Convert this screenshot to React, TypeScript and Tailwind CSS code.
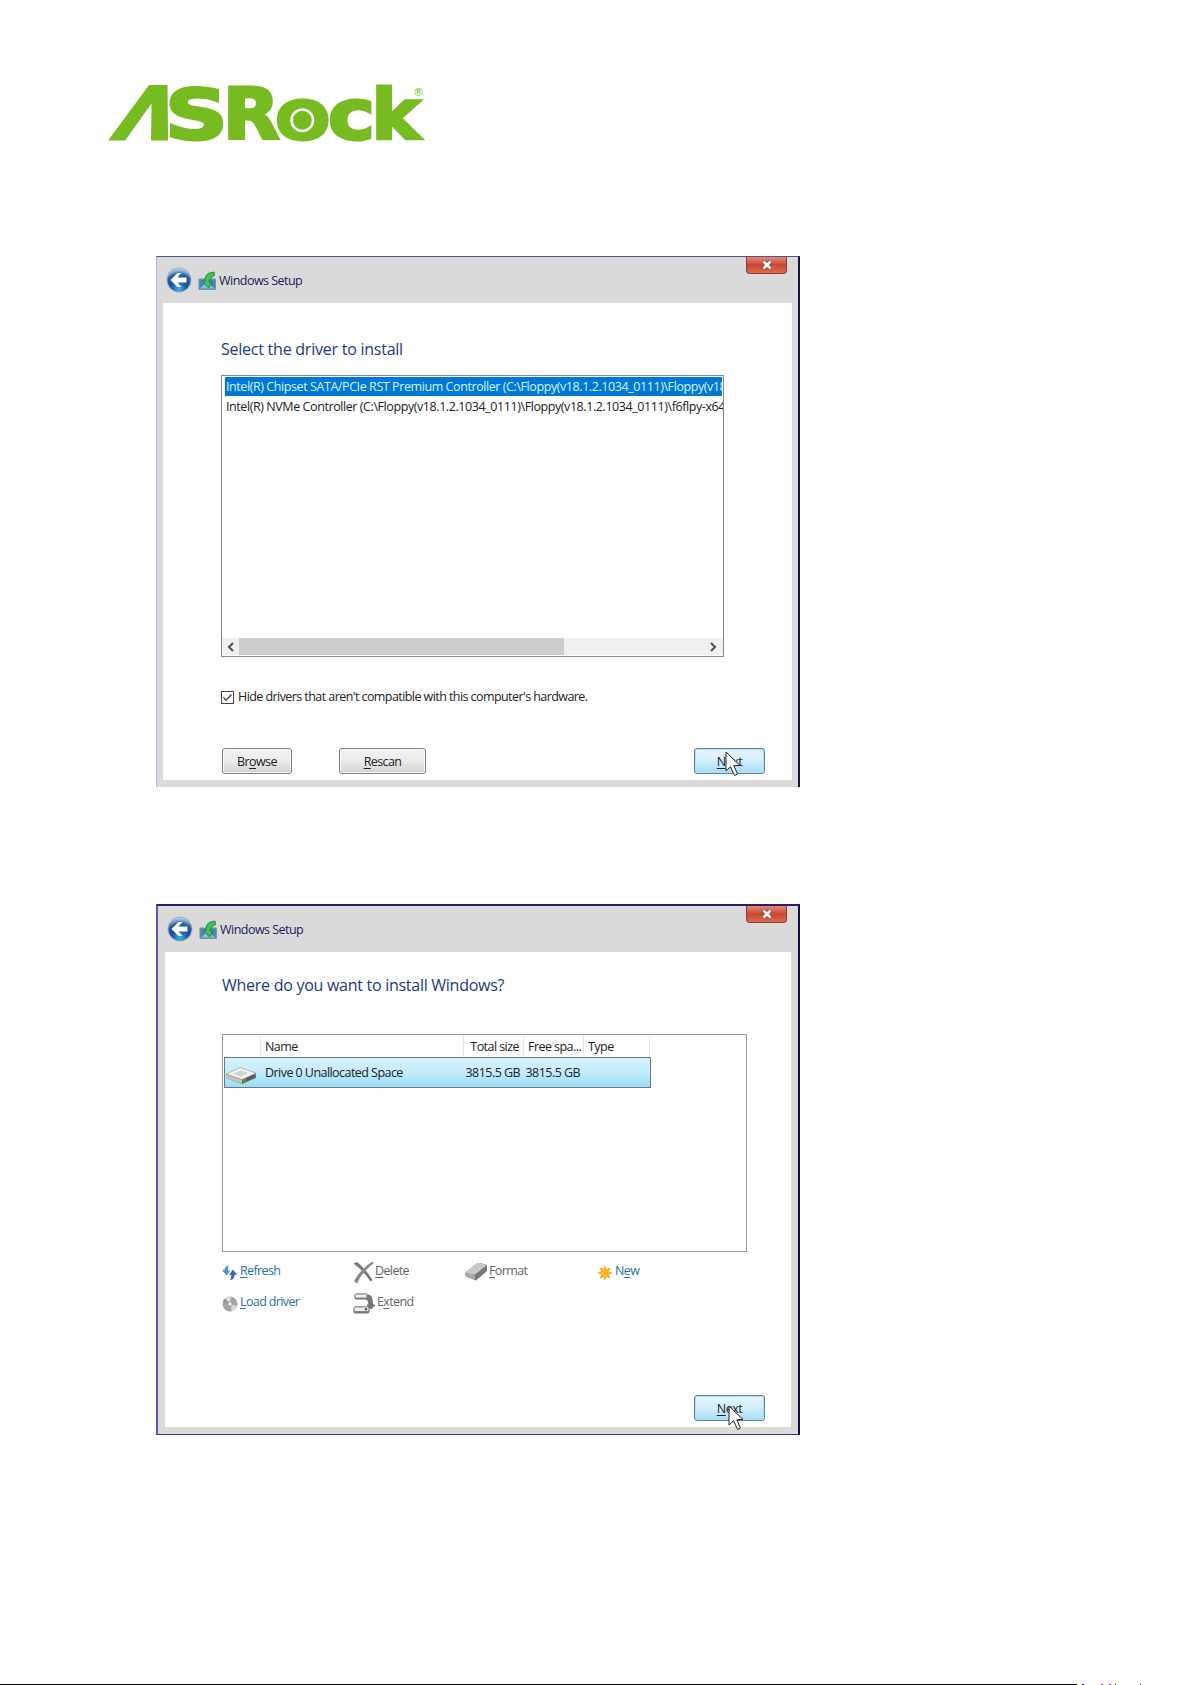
import * as React from 'react';

interface WindowFrameProps {
  className: string,
  barClass: string,
  closeClass: string,
  children: React.ReactNode,
}

export default function App() {
  return (
    <div className="flex h-[1685px] w-[1192px] flex-col overflow-hidden bg-white font-['Open_Sans','Noto_Sans',sans-serif] text-[12.5px] text-[#222]">
      <div className="h-[256px] pt-[60px] pl-[94px]">
        <Logo/>
      </div>
      <DriverWindow/>
      <div className="h-[117px]"/>
      <DiskWindow/>
      <Footer/>
    </div>
  )
}

function Logo() {
  return (
    <svg width="350" height="110" viewBox="94 60 350 110" className="overflow-visible fill-[#76bc21] stroke-[#76bc21] font-['DejaVu_Sans',sans-serif] font-bold" aria-label="ASRock">
      <g fontSize="72" strokeWidth="3">
        <text transform="translate(110.5 139.3) skewX(-20) scale(1.01 1)">Λ</text>
        <text transform="translate(165 138.6) scale(1.21 0.97)">S</text>
        <text transform="translate(223 139.3) scale(1.02 1)">R</text>
        <text transform="translate(275 138.9) scale(1.12 0.97)">o</text>
        <text transform="translate(328 138.9) scale(1.1 0.97)">c</text>
        <text transform="translate(371.5 139.3) scale(1.02 0.96)">k</text>
      </g>
      <circle cx="302.3" cy="120.3" r="10.7" fill="#76bc21" stroke="white" strokeWidth="2.5"/>
      <text x="413" y="96" fontSize="11" strokeWidth="0" className="font-normal">®</text>
    </svg>
  )
}

function WindowFrame(p: WindowFrameProps) {
  return (
    <div className={'relative ml-[156px] w-[644px] bg-[#dadada] ' + p.className}>
      <div className={'flex justify-between ' + p.barClass}>
        <div className="flex items-center">
          <BackIcon/>
          <SetupIcon/>
          <span className="ml-[2px] pt-[3px] text-[12.5px] tracking-[-0.53px] text-[#1c1b5c]">Windows Setup</span>
        </div>
        <CloseButton className={p.closeClass}/>
      </div>
      {p.children}
    </div>
  )
}

function CloseButton(p: {className: string}) {
  return (
    <div className={'flex h-[17px] w-[41px] items-center justify-center rounded-b-[4px] border border-t-0 border-[#8e3a35] bg-linear-to-b from-[#e0887c] via-[#c8452f] via-50% to-[#de6a50] ' + p.className}>
      <svg width="12" height="10" viewBox="0 0 12 10">
        <path d="M2.5 1.5 L9.5 8.5 M9.5 1.5 L2.5 8.5" stroke="#6b4a4a" strokeWidth="4.4"/>
        <path d="M2.5 1.5 L9.5 8.5 M9.5 1.5 L2.5 8.5" stroke="#f4f4f4" strokeWidth="2.8"/>
      </svg>
    </div>
  )
}

function DriverWindow() {
  return (
    <WindowFrame className="h-[531px] border-t border-r-2 border-l border-t-[#55557a] border-r-[#15104a] border-l-[#b9b2dc]" barClass="h-[46px] pl-[9px]" closeClass="mr-[11px]">
      <div className="ml-[6px] h-[477px] w-[629px] bg-white pt-[32px] pl-[58px]">
        <h1 className="h-[40px] text-[16px] leading-[28px] tracking-[-0.24px] text-[#1c3a7c]">Select the driver to install</h1>
        <div className="flex h-[282px] w-[503px] flex-col border border-[#828790] bg-white pt-[1px] text-[12.5px] whitespace-nowrap">
          <div className="ml-[3px] h-[19px] w-[497px] overflow-hidden bg-[#0078d7] pl-[1px] leading-[20px] tracking-[-0.42px] text-[#d8f4ff]">Intel(R) Chipset SATA/PCIe RST Premium Controller (C:\Floppy(v18.1.2.1034_0111)\Floppy(v18</div>
          <div className="ml-[3px] h-[20px] w-[498px] overflow-hidden pl-[1px] leading-[22px] tracking-[-0.42px]">Intel(R) NVMe Controller (C:\Floppy(v18.1.2.1034_0111)\Floppy(v18.1.2.1034_0111)\f6flpy-x64</div>
          <div className="mt-auto mb-px flex h-[17px] items-center bg-[#f0f0f0]">
            <Chevron d="M6 1 L2 5 L6 9" className="ml-[5px]"/>
            <div className="ml-[4px] h-full w-[325px] bg-[#cdcdcd]"/>
            <Chevron d="M2 1 L6 5 L2 9" className="mr-[6px] ml-auto"/>
          </div>
        </div>
        <div className="mt-[30px] flex h-[20px] items-center">
          <svg width="13" height="13" viewBox="0 0 13 13" fill="none">
            <rect x="0.5" y="0.5" width="12" height="12" stroke="#444"/>
            <path d="M2.5 6.5 L5 9.3 L10.5 3.5" stroke="#333" strokeWidth="1.2"/>
          </svg>
          <span className="ml-[4px] pt-px text-[12.5px] tracking-[-0.57px]">Hide drivers that aren't compatible with this computer's hardware.</span>
        </div>
        <div className="mt-[41px] ml-[1px] flex">
          <GrayButton className="w-[70px]">Br<u>o</u>wse</GrayButton>
          <GrayButton className="ml-[47px] w-[87px]"><u>R</u>escan</GrayButton>
          <NextButton className="ml-[268px]" cursorClass="left-[31px] top-[3px]"/>
        </div>
      </div>
    </WindowFrame>
  )
}

function Chevron(p: {d: string, className: string}) {
  return (
    <svg width="8" height="10" viewBox="0 0 8 10" className={p.className}>
      <path d={p.d} fill="none" stroke="#505050" strokeWidth="2"/>
    </svg>
  )
}

function GrayButton(p: {className: string, children: React.ReactNode}) {
  return (
    <button className={'h-[26px] rounded-[3px] border border-[#808080] bg-linear-to-b from-[#f3f3f3] via-[#ebebeb] via-50% to-[#d2d2d2] pt-px text-[12.5px] leading-[24px] tracking-[-0.6px] underline-offset-2 shadow-[inset_0_0_0_1px_#fafafa] ' + p.className}>
      {p.children}
    </button>
  )
}

function NextButton(p: {className: string, cursorClass: string}) {
  return (
    <div className={'relative ' + p.className}>
      <button className="block h-[26px] w-[71px] rounded-[3px] border border-[#5586a3] bg-linear-to-b from-[#e6f5fc] via-[#d3effc] via-50% to-[#a5dcf6] pt-px text-[12.5px] leading-[24px] tracking-[-0.5px] underline-offset-2 shadow-[inset_0_0_0_1px_#b5def2]">
        <u>N</u>ext
      </button>
      <svg width="17" height="26" viewBox="0 0 17 26" className={'absolute ' + p.cursorClass}>
        <path d="M1 1 V20 L5.5 15.8 L9.5 24.5 L12.5 23 L8.8 14.7 L15 14.5 Z" fill="white" stroke="#222" strokeWidth="1"/>
      </svg>
    </div>
  )
}

function DiskWindow() {
  return (
    <WindowFrame className="h-[531px] border-t-2 border-r-2 border-b border-l-2 border-t-[#2b1d66] border-r-[#15084f] border-b-[#3c2c80] border-l-[#6852a5]" barClass="h-[46px] pl-[9px]" closeClass="mr-[11px]">
      <div className="ml-[7px] h-[475px] w-[626px] bg-white pt-[20px] pl-[57px]">
        <h1 className="h-[62px] text-[16px] leading-[26px] tracking-[-0.27px] text-[#1c3a7c]">Where do you want to install Windows?</h1>
        <div className="h-[218px] w-[525px] border border-[#9a9a9a] text-[12.5px] tracking-[-0.55px]">
          <div className="flex h-[22px] leading-[24px] whitespace-nowrap">
            <div className="w-[38px] border-r border-[#e8e8e8]"/>
            <div className="w-[203px] border-r border-[#e8e8e8] pl-[4px]">Name</div>
            <div className="w-[60px] border-r border-[#e8e8e8] pr-[4px] text-right">Total size</div>
            <div className="w-[60px] border-r border-[#e8e8e8] pl-[4px]">Free spa...</div>
            <div className="w-[66px] border-r border-[#e8e8e8] pl-[4px]">Type</div>
          </div>
          <div className="ml-[1px] flex h-[31px] w-[427px] items-center border border-[#70777c] bg-linear-to-b from-[#d7f2fd] via-[#c3ecfc] to-[#98dcf8] whitespace-nowrap">
            <DriveIcon/>
            <span className="ml-[8px] w-[197px] pt-[2px]">Drive 0 Unallocated Space</span>
            <span className="w-[60px] pt-[2px] pr-[2px] text-right">3815.5 GB</span>
            <span className="w-[60px] pt-[2px] pr-[2px] text-right">3815.5 GB</span>
          </div>
        </div>
        <div className="mt-[5px] flex h-[31px] items-center">
          <ActionLink className="w-[131px] text-[#2672aa]" icon={<RefreshIcon/>}><u>R</u>efresh</ActionLink>
          <ActionLink className="w-[112px] text-[#666]" icon={<DeleteIcon/>}><u>D</u>elete</ActionLink>
          <ActionLink className="w-[132px] text-[#666]" icon={<FormatIcon/>}><u>F</u>ormat</ActionLink>
          <ActionLink className="text-[#2672aa]" icon={<NewIcon/>}>N<u>e</u>w</ActionLink>
        </div>
        <div className="flex h-[31px] items-center">
          <ActionLink className="w-[131px] text-[#2672aa]" icon={<DiscIcon/>}><u>L</u>oad driver</ActionLink>
          <ActionLink className="text-[#666]" icon={<ExtendIcon/>}>E<u>x</u>tend</ActionLink>
        </div>
        <NextButton className="mt-[76px] ml-[472px] w-[71px]" cursorClass="left-[34px] top-[10px]"/>
      </div>
    </WindowFrame>
  )
}

function ActionLink(p: {className: string, icon: React.ReactNode, children: React.ReactNode}) {
  return (
    <div className={'flex h-[24px] items-start text-[12.5px] leading-[20px] tracking-[-0.62px] underline-offset-2 ' + p.className}>
      {p.icon}
      <span>{p.children}</span>
    </div>
  )
}

function BackIcon() {
  return (
    <svg width="26" height="26" viewBox="0 0 26 26">
      <defs>
        <radialGradient id="orb" cx="0.5" cy="0.9" r="0.85">
          <stop offset="0" stopColor="#3fb2ea"/>
          <stop offset="0.45" stopColor="#174f9e"/>
          <stop offset="0.75" stopColor="#245ba6"/>
          <stop offset="1" stopColor="#a8c9e8"/>
        </radialGradient>
      </defs>
      <circle cx="13" cy="13" r="12.5" fill="#a5b0bf"/>
      <circle cx="13" cy="13" r="11.5" fill="url(#orb)"/>
      <path d="M4.5 13 L11.5 6 H15.5 L11.5 10.5 H20.5 V15.5 H11.5 L15.5 20 H11.5 Z" fill="white"/>
    </svg>
  )
}

function SetupIcon() {
  return (
    <svg width="19" height="20" viewBox="0 0 19 20" className="mt-px ml-[6px]">
      <path d="M1 8 H17.5 V18.5 H1 Z" fill="#4b88ae" stroke="#7793a5"/>
      <path d="M2 17.5 L8 12 L17 17.5 Z" fill="#8abfe0"/>
      <path d="M16 1 L10 2.5 Q6.5 5 7 10.5 L4.5 10.5 L10.5 17 L14 11.5 L11 11 Q11 7 16.5 4.5 Z" fill="#3fc45a" stroke="#217c35" strokeWidth="0.9"/>
    </svg>
  )
}

function DriveIcon() {
  return (
    <svg width="32" height="20" viewBox="0 0 32 20" className="mt-[6px]">
      <path d="M1 8 L15 2 L31 7 V12 L17 18 L1 12 Z" fill="#77797c"/>
      <path d="M1 8 L15 1.5 L31 7 L17 13.5 Z" fill="#f1f1f1" stroke="#a6a6a6" strokeWidth="0.7"/>
      <path d="M8 8 L16 4.5 L23 7 L16 10.5 Z" fill="#cfd2d4"/>
      <path d="M1 8.5 L17 14 V17.5 L1 12 Z" fill="#c4c4c4"/>
      <path d="M17 14 L30 8.5 V11.5 L17 17.3 Z" fill="#55585a"/>
      <path d="M17.5 13.5 L21 12 V15 L17.5 16.5 Z" fill="#5d9b3c"/>
    </svg>
  )
}

function RefreshIcon() {
  return (
    <svg width="15" height="16" viewBox="0 0 15 16" className="mt-[4px] mr-[3px]">
      <path d="M7 0.5 Q2.5 1 2.5 5 H0 L4.5 10.5 L8.5 5.5 H6 Q5.5 3 7 0.5 Z" fill="#4b93d6"/>
      <path d="M8 15.5 Q12.5 14 12.5 10 H15 L11 4.5 L7 10 H9.3 Q9.5 12.5 8 15.5 Z" fill="#4068b0"/>
    </svg>
  )
}

function DeleteIcon() {
  return (
    <svg width="22" height="23" viewBox="0 0 22 23">
      <path d="M0.5 2.5 L4 1 Q12 7 19.5 19 L17.5 20.5 Q10 9 0.5 2.5 Z" fill="#777"/>
      <path d="M21.5 1.5 L18.5 1 Q7 9 1 20 L4 22.5 Q9 11 21.5 1.5 Z" fill="#8a8a8a"/>
    </svg>
  )
}

function FormatIcon() {
  return (
    <svg width="23" height="20" viewBox="0 0 23 20" className="mt-px mr-px">
      <path d="M0 11 L11 2 Q13 0.5 15 1 L22 3 V9 L11 18.5 L1 14.5 Z" fill="#777"/>
      <path d="M0 11 L11 2 Q13 0.5 15 1 L22 3 L10 12.5 Z" fill="#c9c9c9"/>
      <path d="M0 11 L10 12.5 V18 L1 14.5 Z" fill="#aaa"/>
    </svg>
  )
}

function NewIcon() {
  return (
    <svg width="16" height="16" viewBox="0 0 16 16" className="mt-[4px] mr-[2px]">
      <path d="M8 0 L9.3 4 L13.3 2.5 L11.8 6.4 L16 8 L11.8 9.6 L13.3 13.5 L9.3 12 L8 16 L6.7 12 L2.7 13.5 L4.2 9.6 L0 8 L4.2 6.4 L2.7 2.5 L6.7 4 Z" fill="#e9a33a"/>
      <circle cx="8" cy="8" r="4.5" fill="#ffb81c"/>
    </svg>
  )
}

function DiscIcon() {
  return (
    <svg width="16" height="16" viewBox="0 0 16 16" className="mt-[4px] mr-[2px]">
      <circle cx="8" cy="8" r="7.5" fill="#a5a5a5"/>
      <path d="M8 8 L3 2.5 A7.5 7.5 0 0 1 9 0.6 Z" fill="#dedede"/>
      <path d="M8 8 L15 10 A7.5 7.5 0 0 1 10 15.2 Z" fill="#dcdcdc"/>
      <path d="M8 8 L1 5.5 A7.5 7.5 0 0 1 3 2.5 Z" fill="#78a872"/>
      <circle cx="8" cy="8" r="2.3" fill="#eee" stroke="#888" strokeWidth="0.8"/>
    </svg>
  )
}

function ExtendIcon() {
  return (
    <svg width="22" height="22" viewBox="0 0 22 22" className="mr-[2px]">
      <path d="M14 3 H16 Q19.5 4 19.5 13 H22 L18 17 L14 13 H16 Q16 8 13 7 Z" fill="#777" stroke="#666" strokeWidth="0.8"/>
      <rect x="1.5" y="1.5" width="13" height="6" rx="2" fill="#777"/>
      <rect x="2" y="2" width="12" height="4" rx="1.5" fill="#eee" stroke="#777" strokeWidth="0.8"/>
      <rect x="0.5" y="14.5" width="16" height="7" rx="2" fill="#777"/>
      <rect x="1" y="15" width="15" height="4.5" rx="1.5" fill="#eee" stroke="#777" strokeWidth="0.8"/>
      <circle cx="13" cy="17.2" r="1.2" fill="#555"/>
    </svg>
  )
}

// bottom rule and the tops of the characters that follow it
function Footer() {
  return (
    <div className="mt-auto flex h-px">
      <div className="w-[1077px] bg-black"/>
      <div className="ml-[5px] w-[2px] bg-[#1c1c80]"/>
      <div className="ml-[17px] w-[2px] bg-[#6a2a80]"/>
      <div className="ml-[6px] w-[2px] bg-[#6a2a80]"/>
      <div className="ml-[4px] w-px bg-black"/>
      <div className="ml-[24px] w-px bg-black"/>
    </div>
  )
}
